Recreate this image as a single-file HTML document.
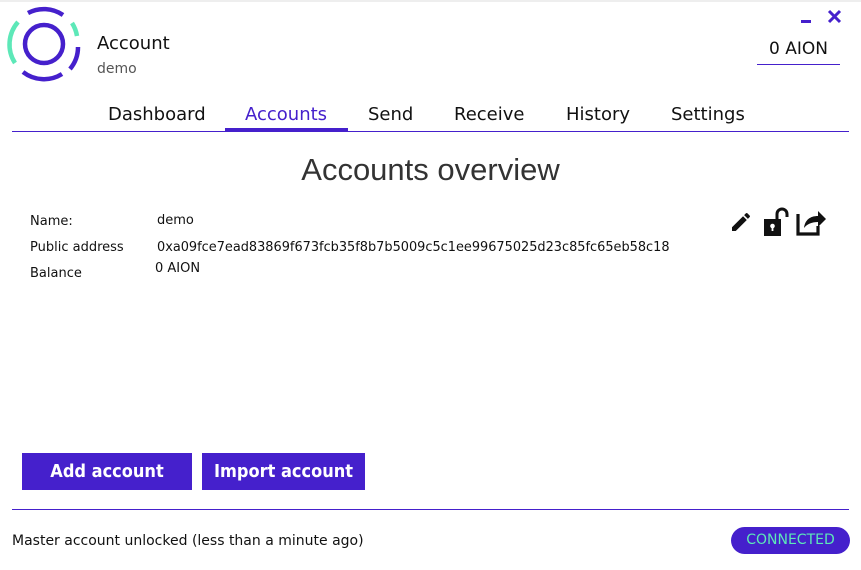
<!DOCTYPE html>
<html><head><meta charset="utf-8"><style>
*{margin:0;padding:0;box-sizing:border-box}
body{width:861px;height:570px;background:#fff;font-family:"DejaVu Sans","Liberation Sans",sans-serif;color:#111;position:relative;overflow:hidden}
.a{position:absolute;white-space:nowrap}
.nav{font-size:18px;top:104px}
.lbl{font-size:13px}
.btn{background:#4520cc;color:#fff;font-family:"DejaVu Sans Condensed","DejaVu Sans",sans-serif;font-weight:bold;font-size:18px;text-align:center;line-height:37px;height:37px;top:453px}
</style></head><body>
<div class="a" style="left:0;top:0;width:861px;height:2px;background:#eee"></div>
<svg class="a" style="left:3px;top:4px" width="82" height="82" viewBox="0 0 82 82">
<circle cx="41" cy="40" r="19" fill="none" stroke="#4520cc" stroke-width="4.5"/>
<g fill="none" stroke-width="4.5">
<path d="M25 9 A34 34 0 0 1 60 11" stroke="#4520cc"/>
<path d="M15 18 A34 34 0 0 0 12 59" stroke="#5de8b8"/>
<path d="M69 19 A34 34 0 0 1 74 32" stroke="#5de8b8"/>
<path d="M75 43 A34 34 0 0 1 67 65" stroke="#4520cc"/>
<path d="M20 68 A34 34 0 0 0 59 70" stroke="#4520cc"/>
</g></svg>
<div class="a" style="left:97px;top:33px;font-size:18px">Account</div>
<div class="a" style="left:97px;top:61px;font-size:14px;color:#555">demo</div>
<div class="a" style="left:801px;top:20px;width:10px;height:3px;background:#4520cc"></div>
<svg class="a" style="left:827px;top:9px" width="15" height="15" viewBox="0 0 15 15"><path d="M2 2L13 13M13 2L2 13" stroke="#4520cc" stroke-width="3"/></svg>
<div class="a" style="left:769px;top:39px;font-size:17px">0 AION</div>
<div class="a" style="left:757px;top:64px;width:83px;height:1px;background:#4520cc"></div>
<div class="a nav" style="left:108px">Dashboard</div>
<div class="a nav" style="left:245px;color:#4520cc">Accounts</div>
<div class="a nav" style="left:368px">Send</div>
<div class="a nav" style="left:454px">Receive</div>
<div class="a nav" style="left:566px">History</div>
<div class="a nav" style="left:671px">Settings</div>
<div class="a" style="left:12px;top:131px;width:837px;height:1px;background:#4520cc"></div>
<div class="a" style="left:225px;top:128px;width:123px;height:4px;background:#4520cc"></div>
<div class="a" style="left:0;top:152px;width:861px;text-align:center;font-family:'Liberation Sans',sans-serif;font-size:31px;color:#333">Accounts overview</div>
<div class="a lbl" style="left:30px;top:214px">Name:</div>
<div class="a lbl" style="left:157px;top:213px">demo</div>
<div class="a lbl" style="left:30px;top:240px">Public address</div>
<div class="a lbl" style="left:157px;top:240px;font-size:12.9px">0xa09fce7ead83869f673fcb35f8b7b5009c5c1ee99675025d23c85fc65eb58c18</div>
<div class="a lbl" style="left:30px;top:266px">Balance</div>
<div class="a lbl" style="left:155px;top:261px">0 AION</div>
<svg class="a" style="left:729px;top:210px" width="24" height="24" viewBox="0 0 24 24"><path d="M3 17.25V21h3.75L17.81 9.94l-3.75-3.75L3 17.25zM20.71 7.04a1 1 0 000-1.41l-2.34-2.34a1 1 0 00-1.41 0l-1.83 1.83 3.75 3.75 1.83-1.83z" fill="#111"/></svg>
<svg class="a" style="left:762px;top:206px" width="28" height="32" viewBox="0 0 28 32"><path d="M15 13V8a5 5 0 0110 0v3" fill="none" stroke="#111" stroke-width="3"/><rect x="2" y="13" width="17" height="17" fill="#111"/><circle cx="10.5" cy="20" r="2.3" fill="#fff"/><rect x="9.6" y="20" width="1.8" height="5" fill="#fff"/></svg>
<svg class="a" style="left:795px;top:206px" width="32" height="30" viewBox="0 0 32 30"><path d="M3 8v20h20v-8" fill="none" stroke="#111" stroke-width="3.2"/><path d="M9 22c1-8 6-12 14-12V5l8 8-8 8v-5c-6 0-11 2-14 6z" fill="#111"/></svg>
<div class="a btn" style="left:22px;width:170px">Add account</div>
<div class="a btn" style="left:202px;width:163px">Import account</div>
<div class="a" style="left:12px;top:509px;width:837px;height:1px;background:#4520cc"></div>
<div class="a" style="left:12px;top:533px;font-size:14px">Master account unlocked (less than a minute ago)</div>
<div class="a" style="left:731px;top:527px;width:119px;height:27px;border-radius:14px;background:#4520cc;color:#5de8b8;font-size:14px;text-align:center;line-height:27px">CONNECTED</div>
</body></html>
